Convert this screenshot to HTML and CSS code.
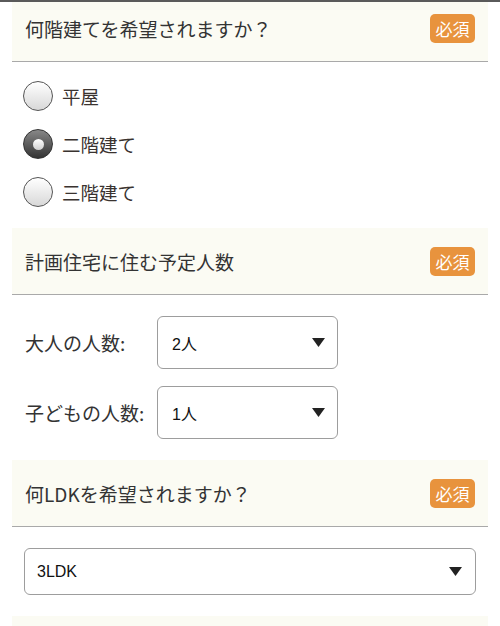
FILE: index.html
```html
<!DOCTYPE html>
<html lang="ja">
<head>
<meta charset="utf-8">
<link rel="stylesheet" href="styles.css">
</head>
<body>
<div class="topbar"></div>
<main class="form">
  <section class="q">
    <header class="q-head first">
      <h2 class="q-title">何階建てを希望されますか？</h2>
      <span class="badge">必須</span>
    </header>
    <div class="radios">
      <label class="radio"><span class="dot"></span><span class="r-label">平屋</span></label>
      <label class="radio"><span class="dot checked"></span><span class="r-label">二階建て</span></label>
      <label class="radio"><span class="dot"></span><span class="r-label">三階建て</span></label>
    </div>
  </section>

  <section class="q">
    <header class="q-head">
      <h2 class="q-title">計画住宅に住む予定人数</h2>
      <span class="badge">必須</span>
    </header>
    <div class="people">
      <div class="p-row">
        <span class="p-label">大人の人数:</span>
        <div class="select small"><span class="s-val">2人</span><svg class="tri" width="13" height="9" viewBox="0 0 13 9"><path d="M0 0H13L6.5 9Z" fill="#222"/></svg></div>
      </div>
      <div class="p-row">
        <span class="p-label">子どもの人数:</span>
        <div class="select small"><span class="s-val">1人</span><svg class="tri" width="13" height="9" viewBox="0 0 13 9"><path d="M0 0H13L6.5 9Z" fill="#222"/></svg></div>
      </div>
    </div>
  </section>

  <section class="q">
    <header class="q-head">
      <h2 class="q-title">何LDKを希望されますか？</h2>
      <span class="badge">必須</span>
    </header>
    <div class="ldk">
      <div class="select wide"><span class="s-val">3LDK</span><svg class="tri" width="13" height="9" viewBox="0 0 13 9"><path d="M0 0H13L6.5 9Z" fill="#222"/></svg></div>
    </div>
  </section>

  <section class="q">
    <header class="q-head"></header>
  </section>
</main>
</body>
</html>
```

FILE: styles.css
```css
html, body {
  margin: 0;
  padding: 0;
  background: #fff;
}
body {
  font-family: "Noto Sans CJK JP", "Noto Sans", sans-serif;
  color: #333;
  overflow: hidden;
}
.topbar {
  position: fixed;
  top: 0;
  left: 0;
  right: 0;
  height: 2px;
  background: #5a5a5a;
  z-index: 10;
}
.form {
  margin: -5px 12px 0;
}
.q-head {
  height: 66px;
  background: #fbfbf3;
  border-bottom: 1px solid #a9a9a9;
  display: flex;
  align-items: center;
  justify-content: space-between;
  padding: 0 13px;
}
.q-title {
  margin: 0;
  font-size: 19px;
  font-weight: normal;
  color: #333;
  letter-spacing: 0;
}
.badge {
  background: #e8933d;
  color: #fff;
  font-size: 17px;
  line-height: 29px;
  height: 29px;
  padding: 0 5.5px;
  border-radius: 5px;
}
.radios {
  padding: 10px 0 12px;
  display: flex;
  flex-direction: column;
}
.radio {
  height: 48px;
  display: flex;
  align-items: center;
  gap: 9px;
  padding-left: 11px;
}
.dot {
  width: 28px;
  height: 28px;
  border-radius: 50%;
  border: 1.5px solid #555;
  background: linear-gradient(#ffffff, #d8d8d8);
  display: flex;
  align-items: center;
  justify-content: center;
  flex: none;
}
.dot.checked {
  background: linear-gradient(#888, #333);
  border-color: #333;
}
.dot.checked::after {
  content: "";
  width: 11px;
  height: 11px;
  border-radius: 50%;
  background: linear-gradient(#ffffff, #cfcfcf);
}
.r-label {
  font-size: 18.5px;
  color: #3a3330;
}
.people {
  padding: 21px 0 21px 13px;
  display: flex;
  flex-direction: column;
  gap: 17px;
}
.p-row {
  display: flex;
  align-items: center;
}
.p-label {
  width: 132px;
  font-size: 19px;
  color: #333;
}
.select {
  box-sizing: border-box;
  border: 1px solid #9d9d9d;
  border-radius: 6px;
  background: #fff;
  display: flex;
  align-items: center;
  justify-content: space-between;
}
.select.small {
  width: 181px;
  height: 53px;
  padding: 0 12px 0 14px;
}
.s-val {
  font-family: "Liberation Sans", "Noto Sans CJK JP", sans-serif;
  font-size: 16px;
  color: #111;
}
.ldk {
  padding: 21px 12px 21px;
}
.select.wide {
  height: 47px;
  padding: 0 13px 0 12px;
}
```
